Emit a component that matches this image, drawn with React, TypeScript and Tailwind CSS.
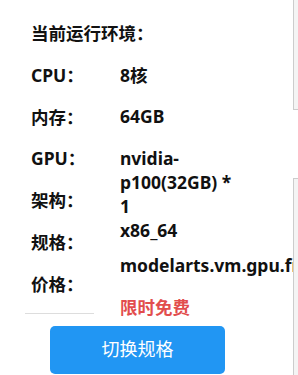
import type { ReactNode } from "react";

const labels = ["CPU：", "内存：", "GPU：", "架构：", "规格：", "价格："];

// value rows in the right column, each with the gap that follows it
function Value({ children, className = "" }: { children: ReactNode; className?: string }) {
  return <div className={`leading-6 whitespace-nowrap ${className}`}>{children}</div>;
}

export default function App() {
  return (
    <div
      className="relative w-[298px] h-[375px] overflow-hidden bg-white text-[17.5px] text-[#111]"
      style={{ fontFamily: '"Noto Sans", "Noto Sans CJK SC", sans-serif' }}
    >
      <div className="pt-[21px]">
        <div className="pl-[31px] leading-6 font-bold">当前运行环境：</div>

        <div className="flex items-start mt-[17.7px]">
          {/* label column, closed by a short rule */}
          <div className="ml-[25px] w-[69px] shrink-0 pl-[6px] pb-[17px] border-b border-[#dddddd] flex flex-col gap-[17.85px] font-bold">
            {labels.map((l) => (
              <div key={l} className="leading-6 whitespace-nowrap">
                {l}
              </div>
            ))}
          </div>

          <div className="ml-[26px] flex flex-col font-bold">
            <Value className="mb-[17px]">8核</Value>
            <Value className="mb-[18px]">64GB</Value>
            <Value>
              nvidia-
              <br />
              p100(32GB) *
              <br />1
            </Value>
            <Value className="mb-[11px]">x86_64</Value>
            <Value className="mb-[18px]">modelarts.vm.gpu.free</Value>
            <Value className="text-[#e24d4d]">限时免费</Value>
          </div>
        </div>

        <button className="ml-[50px] mt-[7px] w-[175px] h-[48px] rounded-[5px] bg-[#2196f3] text-white text-[18px] flex items-center justify-center">
          切换规格
        </button>
      </div>

      {/* edges of the neighbouring cards */}
      <div className="absolute left-[293px] top-[-1px] w-[20px] h-[111px] border border-[#cccccc] bg-[#f4f4f4]" />
      <div className="absolute left-[293px] top-[178px] w-[20px] h-[220px] border border-[#cccccc] bg-[#f4f4f4]" />
    </div>
  );
}
